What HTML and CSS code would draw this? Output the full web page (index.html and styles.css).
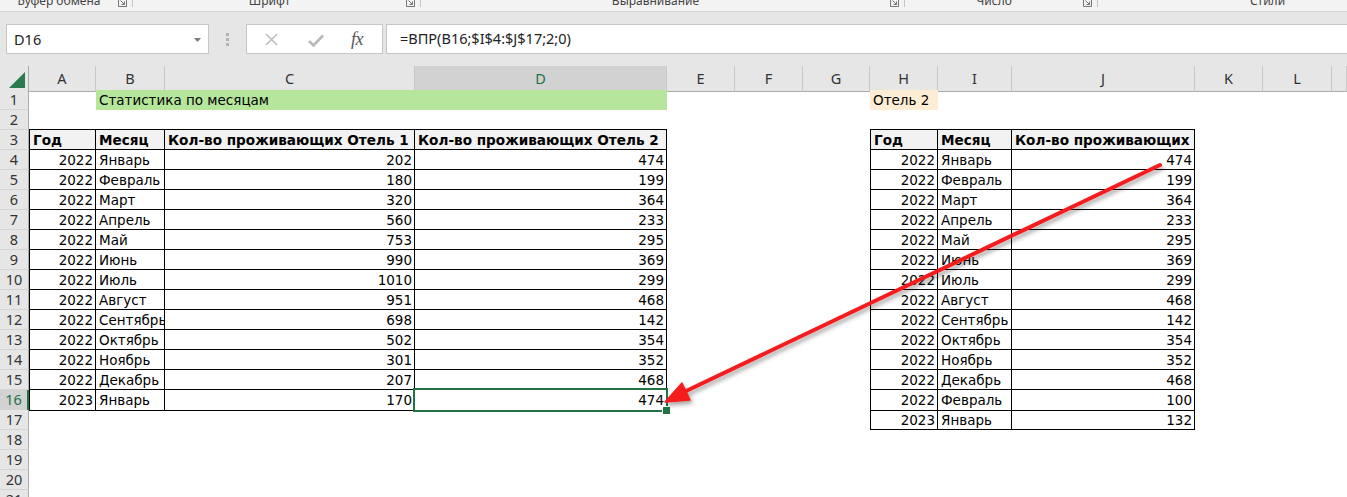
FILE: index.html
```html
<!DOCTYPE html>
<html lang="ru">
<head>
<meta charset="utf-8">
<title>Excel</title>
<link rel="stylesheet" href="styles.css">
</head>
<body>
<div class="ribbon">
  <div class="grp g1"><div class="lbl">Буфер обмена</div><svg class="launch" viewBox="0 0 9 8"><path d="M0.5 0v7.5h8V0" fill="none" stroke="#777"/><path d="M2.5 1.5l4 4M6.5 2.5v3h-3" fill="none" stroke="#777"/></svg><div class="sep"></div></div>
  <div class="grp g2"><div class="lbl">Шрифт</div><svg class="launch" viewBox="0 0 9 8"><path d="M0.5 0v7.5h8V0" fill="none" stroke="#777"/><path d="M2.5 1.5l4 4M6.5 2.5v3h-3" fill="none" stroke="#777"/></svg><div class="sep"></div></div>
  <div class="grp g3"><div class="lbl">Выравнивание</div><svg class="launch" viewBox="0 0 9 8"><path d="M0.5 0v7.5h8V0" fill="none" stroke="#777"/><path d="M2.5 1.5l4 4M6.5 2.5v3h-3" fill="none" stroke="#777"/></svg><div class="sep"></div></div>
  <div class="grp g4"><div class="lbl">Число</div><svg class="launch" viewBox="0 0 9 8"><path d="M0.5 0v7.5h8V0" fill="none" stroke="#777"/><path d="M2.5 1.5l4 4M6.5 2.5v3h-3" fill="none" stroke="#777"/></svg><div class="sep"></div></div>
  <div class="grp g5"><div class="lbl">Стили</div></div>
</div>

<div class="fbar">
  <div class="namebox"><span>D16</span><svg class="dd" viewBox="0 0 7 4"><path d="M0 0h7L3.5 4z" fill="#7a7a7a"/></svg></div>
  <div class="dots"><i></i><i></i><i></i></div>
  <div class="btns">
    <svg class="ic-x" viewBox="0 0 14 14"><path d="M1 1l12 12M13 1L1 13" stroke="#b9b9b9" stroke-width="1.6" fill="none"/></svg>
    <svg class="ic-ok" viewBox="0 0 16 13"><path d="M1 7l4.5 4.5L15 1.5" stroke="#b9b9b9" stroke-width="2.6" fill="none"/></svg>
    <span class="fx">fx</span>
  </div>
  <div class="finput">=ВПР(B16;$I$4:$J$17;2;0)</div>
</div>

<div class="sheet">
  <div class="r hdr"><div class="corner"><svg viewBox="0 0 16 16"><path d="M16 0V16H0z" fill="#217346" opacity="0.95"/></svg></div><span>A</span><span>B</span><span>C</span><span class="csel">D</span><span>E</span><span>F</span><span>G</span><span>H</span><span>I</span><span>J</span><span>K</span><span>L</span><span></span></div>

  <div class="r"><div class="h">1</div><span></span><span class="c title">Статистика по месяцам</span><span></span><span></span><span></span><span class="c hotel">Отель 2</span><span></span><span></span><span></span><span></span><span></span></div>
  <div class="r"><div class="h">2</div><span class="bb"></span><span class="bb"></span><span class="bb"></span><span class="bb"></span><span></span><span></span><span></span><span class="bb"></span><span class="bb"></span><span class="bb"></span><span></span><span></span><span></span></div>
  <div class="r"><div class="h">3</div><span class="c b bl hd">Год</span><span class="c b hd">Месяц</span><span class="c b hd">Кол-во проживающих Отель 1</span><span class="c b hd">Кол-во проживающих Отель 2</span><span></span><span></span><span></span><span class="c b bl hd">Год</span><span class="c b hd">Месяц</span><span class="c b hd">Кол-во проживающих</span><span></span><span></span><span></span></div>
  <div class="r"><div class="h">4</div><span class="c b bl n">2022</span><span class="c b">Январь</span><span class="c b n">202</span><span class="c b n">474</span><span></span><span></span><span></span><span class="c b bl n">2022</span><span class="c b">Январь</span><span class="c b n">474</span><span></span><span></span><span></span></div>
  <div class="r"><div class="h">5</div><span class="c b bl n">2022</span><span class="c b">Февраль</span><span class="c b n">180</span><span class="c b n">199</span><span></span><span></span><span></span><span class="c b bl n">2022</span><span class="c b">Февраль</span><span class="c b n">199</span><span></span><span></span><span></span></div>
  <div class="r"><div class="h">6</div><span class="c b bl n">2022</span><span class="c b">Март</span><span class="c b n">320</span><span class="c b n">364</span><span></span><span></span><span></span><span class="c b bl n">2022</span><span class="c b">Март</span><span class="c b n">364</span><span></span><span></span><span></span></div>
  <div class="r"><div class="h">7</div><span class="c b bl n">2022</span><span class="c b">Апрель</span><span class="c b n">560</span><span class="c b n">233</span><span></span><span></span><span></span><span class="c b bl n">2022</span><span class="c b">Апрель</span><span class="c b n">233</span><span></span><span></span><span></span></div>
  <div class="r"><div class="h">8</div><span class="c b bl n">2022</span><span class="c b">Май</span><span class="c b n">753</span><span class="c b n">295</span><span></span><span></span><span></span><span class="c b bl n">2022</span><span class="c b">Май</span><span class="c b n">295</span><span></span><span></span><span></span></div>
  <div class="r"><div class="h">9</div><span class="c b bl n">2022</span><span class="c b">Июнь</span><span class="c b n">990</span><span class="c b n">369</span><span></span><span></span><span></span><span class="c b bl n">2022</span><span class="c b">Июнь</span><span class="c b n">369</span><span></span><span></span><span></span></div>
  <div class="r"><div class="h">10</div><span class="c b bl n">2022</span><span class="c b">Июль</span><span class="c b n">1010</span><span class="c b n">299</span><span></span><span></span><span></span><span class="c b bl n">2022</span><span class="c b">Июль</span><span class="c b n">299</span><span></span><span></span><span></span></div>
  <div class="r"><div class="h">11</div><span class="c b bl n">2022</span><span class="c b">Август</span><span class="c b n">951</span><span class="c b n">468</span><span></span><span></span><span></span><span class="c b bl n">2022</span><span class="c b">Август</span><span class="c b n">468</span><span></span><span></span><span></span></div>
  <div class="r"><div class="h">12</div><span class="c b bl n">2022</span><span class="c b">Сентябрь</span><span class="c b n">698</span><span class="c b n">142</span><span></span><span></span><span></span><span class="c b bl n">2022</span><span class="c b">Сентябрь</span><span class="c b n">142</span><span></span><span></span><span></span></div>
  <div class="r"><div class="h">13</div><span class="c b bl n">2022</span><span class="c b">Октябрь</span><span class="c b n">502</span><span class="c b n">354</span><span></span><span></span><span></span><span class="c b bl n">2022</span><span class="c b">Октябрь</span><span class="c b n">354</span><span></span><span></span><span></span></div>
  <div class="r"><div class="h">14</div><span class="c b bl n">2022</span><span class="c b">Ноябрь</span><span class="c b n">301</span><span class="c b n">352</span><span></span><span></span><span></span><span class="c b bl n">2022</span><span class="c b">Ноябрь</span><span class="c b n">352</span><span></span><span></span><span></span></div>
  <div class="r"><div class="h">15</div><span class="c b bl n">2022</span><span class="c b">Декабрь</span><span class="c b n">207</span><span class="c b n">468</span><span></span><span></span><span></span><span class="c b bl n">2022</span><span class="c b">Декабрь</span><span class="c b n">468</span><span></span><span></span><span></span></div>
  <div class="r"><div class="h hsel">16</div><span class="c b bl n">2023</span><span class="c b">Январь</span><span class="c b n">170</span><span class="c b n sel">474</span><span></span><span></span><span></span><span class="c b bl n">2022</span><span class="c b">Февраль</span><span class="c b n">100</span><span></span><span></span><span></span></div>
  <div class="r"><div class="h">17</div><span></span><span></span><span></span><span></span><span></span><span></span><span></span><span class="c b bl n">2023</span><span class="c b">Январь</span><span class="c b n">132</span><span></span><span></span><span></span></div>
  <div class="r"><div class="h">18</div></div>
  <div class="r"><div class="h">19</div></div>
  <div class="r"><div class="h">20</div></div>
  <div class="r"><div class="h">21</div></div>
</div>

<svg class="arrow" viewBox="0 0 1347 497" width="1347" height="497">
  <defs>
    <filter id="sh" x="-10%" y="-10%" width="120%" height="130%">
      <feDropShadow dx="2" dy="3" stdDeviation="2" flood-color="#000" flood-opacity="0.35"/>
    </filter>
  </defs>
  <g filter="url(#sh)">
    <line x1="1160" y1="165" x2="684" y2="392" stroke="#f41c1c" stroke-width="4" stroke-linecap="round"/>
    <path d="M665 402L682 383L690 400z" fill="#f41c1c" stroke="#f41c1c" stroke-width="1.5" stroke-linejoin="round"/>
  </g>
</svg>
</body>
</html>
```
FILE: styles.css
```css
* { box-sizing: border-box; margin: 0; padding: 0; }
html, body { width: 1347px; height: 497px; overflow: hidden; background: #fff; }
body { position: relative; font-family: "DejaVu Sans", sans-serif; color: #000; }

/* ribbon strip */
.ribbon { height: 12px; background: #f3f3f3; border-bottom: 1px solid #d5d5d5; display: flex; overflow: hidden; }
.grp { display: flex; align-items: flex-start; height: 11px; }
.g1 { width: 133px; }
.g2 { width: 288px; }
.g3 { width: 484px; }
.g4 { width: 193px; }
.g5 { flex: 1; padding-left: 90px; }
.lbl { flex: 1; text-align: center; font-family: "Noto Sans", sans-serif; font-size: 12px; line-height: 16px; margin-top: -7px; color: #444; white-space: nowrap; }
.launch { width: 9px; height: 8px; margin-top: -1px; margin-right: 5px; }
.sep { width: 1px; height: 7px; background: #c6c6c6; }

/* formula bar */
.fbar { height: 54px; background: #e6e6e6; padding: 12px 0 12px 6px; display: flex; }
.namebox { width: 203px; height: 30px; background: #fff; border: 1px solid #c6c6c6; display: flex; align-items: center; justify-content: space-between; padding: 0 7px; font-family: "Noto Sans", sans-serif; font-size: 14.5px; color: #222; }
.dd { width: 7px; height: 4px; margin-top: 2px; }
.dots { width: 37px; display: flex; flex-direction: column; align-items: center; justify-content: center; gap: 2px; }
.dots i { display: block; width: 3px; height: 3px; background: #b3b3b3; }
.btns { width: 137px; height: 30px; background: #fff; border: 1px solid #c6c6c6; display: flex; align-items: center; padding-left: 18px; }
.ic-x { width: 13px; height: 13px; }
.ic-ok { width: 16px; height: 13px; margin-left: 30px; margin-top: 3px; }
.fx { margin-left: 27px; font-family: "Liberation Serif", serif; font-style: italic; font-size: 18px; color: #555; letter-spacing: -0.5px; }
.finput { flex: 1; margin-left: 3px; height: 30px; background: #fff; border: 1px solid #c6c6c6; border-right: 0; padding-left: 13px; font-family: "Noto Sans", sans-serif; font-size: 14.5px; line-height: 27px; color: #222; }

/* sheet */
.sheet { display: flex; flex-direction: column; }
.r { display: grid; grid-template-columns: 29px 67px 69px 250px 252px 68px 68px 67px 68px 74px 183px 68px 69px 1fr; height: 20px; flex: none; }
.r > span { display: block; min-width: 0; }
.hdr { height: 24px; }
.hdr > span { background: #e6e6e6; border-right: 1px solid #c8c8c8; border-bottom: 1px solid #ababab; text-align: center; font-family: "Noto Sans", sans-serif; font-size: 14.5px; line-height: 24px; color: #333; }
.hdr > .csel { background: #d2d2d2; color: #217346; border-bottom: 2px solid #217346; }
.corner { background: #e6e6e6; border-right: 1px solid #ababab; border-bottom: 1px solid #ababab; display: flex; align-items: flex-end; justify-content: flex-end; padding: 0 3px 3px 0; }
.corner svg { width: 16px; height: 16px; }

.h { background: #e6e6e6; border-right: 1px solid #ababab; border-bottom: 1px solid #d4d4d4; text-align: center; font-family: "Noto Sans", sans-serif; font-size: 14.5px; line-height: 19px; color: #333; }
.hsel { background: #d2d2d2; color: #217346; border-right: 2px solid #217346; }

.c { font-size: 13.5px; line-height: 19px; padding: 1px 3px 0; white-space: nowrap; overflow: hidden; }
.n { text-align: right; padding-right: 2px; }
.b { border-right: 1px solid #000; border-bottom: 1px solid #000; }
.bl { border-left: 1px solid #000; }
.bb { border-bottom: 1px solid #000; }
.hd { background: #f2f2f2; font-weight: bold; font-size: 13.6px; }
.title { grid-column: span 3; background: #b6e59c; }
.hotel { background: #fcedd4; }
.sel { position: relative; overflow: visible; }
.sel::after { content: ""; position: absolute; left: -2px; top: -2px; right: -2px; bottom: -2px; border: 2px solid #217346; }
.sel::before { content: ""; position: absolute; right: -5px; bottom: -5px; width: 7px; height: 7px; background: #217346; border: 1px solid #fff; z-index: 2; }

.arrow { position: absolute; left: 0; top: 0; pointer-events: none; z-index: 10; }
```
